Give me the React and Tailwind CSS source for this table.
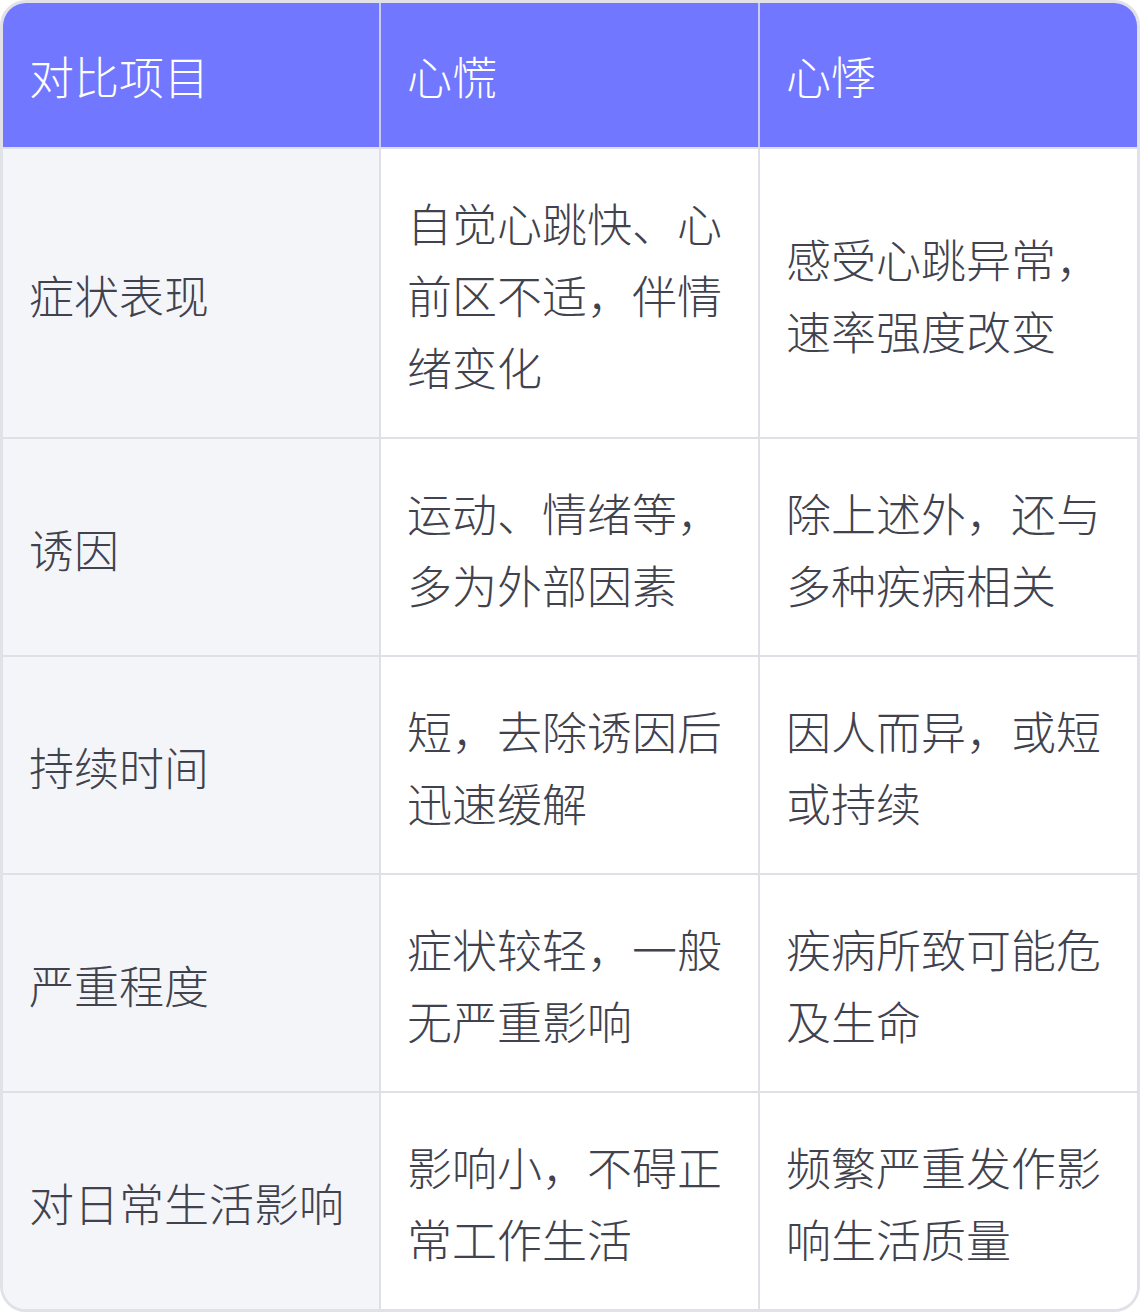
import React from 'react';

const rows = [
  ['症状表现', '自觉心跳快、心前区不适，伴情绪变化', '感受心跳异常，速率强度改变'],
  ['诱因', '运动、情绪等，多为外部因素', '除上述外，还与多种疾病相关'],
  ['持续时间', '短，去除诱因后迅速缓解', '因人而异，或短或持续'],
  ['严重程度', '症状较轻，一般无严重影响', '疾病所致可能危及生命'],
  ['对日常生活影响', '影响小，不碍正常工作生活', '频繁严重发作影响生活质量'],
];

export default function App() {
  return (
    <div
      className="w-[1140px] bg-white"
      style={{ fontFamily: '"Noto Sans CJK SC", "Noto Sans", sans-serif' }}
    >
      <div className="border-[3px] border-[#e1e2e7] rounded-[26px] overflow-hidden text-[45px] leading-[72px] font-light">
        {/* Header */}
        <div className="grid grid-cols-[378px_379px_1fr] bg-[#7177ff] text-white border-b-2 border-[#dfe0e6]">
          <div className="px-[26px] pt-[37px] pb-[35px] border-r-2 border-[#c9cbf0]">对比项目</div>
          <div className="px-[26px] pt-[37px] pb-[35px] border-r-2 border-[#c9cbf0]">心慌</div>
          <div className="px-[26px] pt-[37px] pb-[35px]">心悸</div>
        </div>

        {/* Body */}
        {rows.map((row, i) => (
          <div
            key={i}
            className={`grid grid-cols-[378px_379px_1fr] text-[#40424e] ${i < rows.length - 1 ? 'border-b-2 border-[#dfe0e6]' : ''}`}
          >
            <div className="flex items-center px-[26px] pt-[38px] pb-[34px] bg-[#f4f5f9] border-r-2 border-[#dfe0e6]">
              {row[0]}
            </div>
            <div className="flex items-center px-[26px] pt-[38px] pb-[34px] bg-white border-r-2 border-[#dfe0e6]">
              {row[1]}
            </div>
            <div className="flex items-center px-[26px] pt-[38px] pb-[34px] bg-white">{row[2]}</div>
          </div>
        ))}
      </div>
    </div>
  );
}
